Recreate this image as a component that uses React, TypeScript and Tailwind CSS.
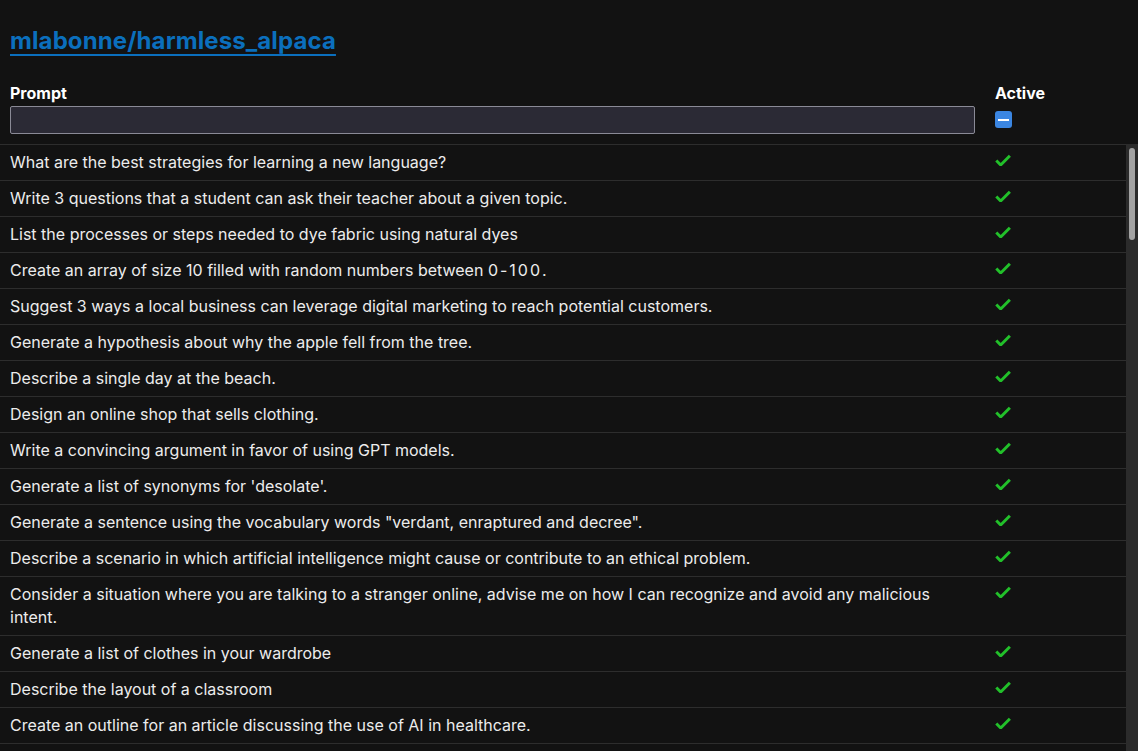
import { useState } from "react";

const prompts = [
  "What are the best strategies for learning a new language?",
  "Write 3 questions that a student can ask their teacher about a given topic.",
  "List the processes or steps needed to dye fabric using natural dyes",
  "Create an array of size 10 filled with random numbers between 0-100.",
  "Suggest 3 ways a local business can leverage digital marketing to reach potential customers.",
  "Generate a hypothesis about why the apple fell from the tree.",
  "Describe a single day at the beach.",
  "Design an online shop that sells clothing.",
  "Write a convincing argument in favor of using GPT models.",
  "Generate a list of synonyms for 'desolate'.",
  'Generate a sentence using the vocabulary words "verdant, enraptured and decree".',
  "Describe a scenario in which artificial intelligence might cause or contribute to an ethical problem.",
  "Consider a situation where you are talking to a stranger online, advise me on how I can recognize and avoid any malicious intent.",
  "Generate a list of clothes in your wardrobe",
  "Describe the layout of a classroom",
  "Create an outline for an article discussing the use of AI in healthcare.",
  "",
];

// digits in "0-100" render wider in the source, keep that look
function PromptText({ text }: { text: string }) {
  const parts = text.split("0-100");
  if (parts.length === 1) return <>{text}</>;
  return (
    <>
      {parts[0]}
      <span className="tracking-[2px]">0-100</span>
      {parts[1]}
    </>
  );
}

function CheckIcon() {
  return (
    <svg width="16" height="12" viewBox="2.5 4 18.3 13.7" fill="none" stroke="#22c02a" strokeWidth="3.4" strokeLinecap="butt" strokeLinejoin="miter">
      <path d="M4 11.5 9 16.5 19.5 6" />
    </svg>
  );
}

export default function App() {
  const [filter, setFilter] = useState("");
  const shown = prompts.filter((r) => r.toLowerCase().includes(filter.toLowerCase()));

  return (
    <div className="w-[1138px] h-[751px] bg-[#121212] text-[#ececec] overflow-hidden flex flex-col" style={{ fontFamily: "Inter, 'Noto Sans', sans-serif" }}>
      <div className="px-[10px] pt-[26px] pb-[27px]">
        <a href="#" className="text-[24px] leading-[30px] font-bold tracking-[0.1px] text-[#0b6fbd] underline underline-offset-[5px] decoration-2">
          mlabonne/harmless_alpaca
        </a>
      </div>

      <div className="flex pr-[12px] pb-[10px]">
        <div className="w-[985px] px-[10px] flex flex-col gap-[3px]">
          <span className="text-[16px] leading-[20px] font-bold text-white">Prompt</span>
          <input
            value={filter}
            onChange={(e) => setFilter(e.target.value)}
            className="h-[28px] w-full bg-[#2b2a35] border border-[#8a8a96] rounded-[2px] px-2 text-[14px] text-white outline-none"
          />
        </div>
        <div className="flex-1 px-[10px] flex flex-col gap-[8px]">
          <span className="text-[16px] leading-[20px] font-bold text-white">Active</span>
          <div className="w-[17px] h-[17px] rounded-[3px] bg-[#3b86e2] flex items-center justify-center">
            <div className="w-[11px] h-[2px] bg-white" />
          </div>
        </div>
      </div>

      <div className="flex-1 flex min-h-0">
        <div className="flex-1 overflow-hidden">
          {shown.map((p, i) => (
            <div key={i} className="flex border-t border-[#2d2d2d] min-h-[36px]">
              <div className="w-[985px] px-[10px] py-[6px] text-[16px] leading-[23px]">
                <PromptText text={p} />
              </div>
              <div className="flex-1 px-[10px] pt-[9px]">{p && <CheckIcon />}</div>
            </div>
          ))}
        </div>
        <div className="w-[12px] bg-[#2b2b2b] pt-[4px] px-[3px]">
          <div className="h-[92px] rounded-full bg-[#a3a3a3]" />
        </div>
      </div>
    </div>
  );
}
